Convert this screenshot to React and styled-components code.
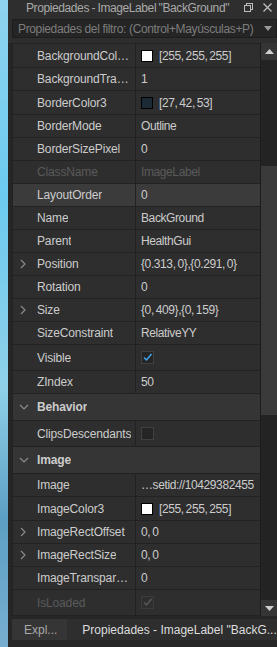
import styled, { createGlobalStyle } from 'styled-components';

const Global = createGlobalStyle`
    html, body {
        margin: 0;
        padding: 0;
        background: #262626;
    }
    body {
        font-family: "Liberation Sans", Arial, sans-serif;
        font-size: 12px;
        color: #cccccc;
    }
`

const Page = styled.div`
    width: 277px;
    height: 647px;
    display: flex;
    overflow: hidden;
`

const Sky = styled.div`
    width: 8px;
    flex-shrink: 0;
    background: linear-gradient(180deg, #8fd3ef 0%, #6ccaf0 30%, #8fd0e8 60%, #5c9fc4 80%, #77aed0 100%);
`

const Panel = styled.div`
    flex: 1;
    min-width: 0;
    display: flex;
    flex-direction: column;
    background: #2e2e2e;
`

const TitleBar = styled.div`
    height: 15px;
    display: flex;
    align-items: center;
    padding: 0 4px 0 18px;
    color: #a9a9a9;
    font-size: 12px;
    letter-spacing: -0.4px;
    word-spacing: -0.5px;
    gap: 8px;

    svg {
        flex-shrink: 0;
    }
`

const TitleText = styled.div`
    flex: 1;
    min-width: 0;
    white-space: nowrap;
    overflow: hidden;
`

const FilterWrap = styled.div`
    padding: 4px 0 5px 4px;
`

const FilterBox = styled.div`
    height: 17px;
    display: flex;
    align-items: center;
    padding: 0 4px 0 5px;
    background: #252525;
    border: 1px solid #1d1d1d;
    color: #7c7c7c;
    font-size: 12px;
    letter-spacing: -0.35px;
`

const Body = styled.div`
    flex: 1;
    display: flex;
    padding-left: 4px;
    background: #262626;
    min-height: 0;
`

const Grid = styled.div`
    flex: 1;
    min-width: 0;
    display: flex;
    flex-direction: column;
    border-top: 1px solid #222;
    border-left: 1px solid #222;
`

const Row = styled.div`
    height: ${p => p.$h}px;
    flex-shrink: 0;
    display: grid;
    grid-template-columns: 123px 1fr;
    background: ${p => (p.$active ? '#3b3b3b' : p.$header ? '#353535' : '#2e2e2e')};
    border-bottom: 1px solid #222;
    box-sizing: border-box;
`

const NameCell = styled.div`
    position: relative;
    display: flex;
    align-items: center;
    padding: 0 3px 0 24px;
    border-right: ${p => (p.$header ? 'none' : '1px solid #222')};
    color: ${p => (p.$disabled ? '#5a5a5a' : '#cccccc')};
    font-weight: ${p => (p.$header ? 'bold' : 'normal')};
    letter-spacing: -0.15px;
    min-width: 0;
`

const NameText = styled.span`
    overflow: hidden;
    text-overflow: ellipsis;
    white-space: nowrap;
`

const Chevron = styled.svg`
    position: absolute;
    left: 6px;
    top: 50%;
    transform: translateY(-50%);
`

const ValueCell = styled.div`
    display: flex;
    align-items: center;
    gap: 6px;
    padding-left: 5px;
    color: ${p => (p.$disabled ? '#5a5a5a' : '#cccccc')};
    letter-spacing: -0.4px;
    word-spacing: -1px;
    white-space: nowrap;
    overflow: hidden;
    min-width: 0;
`

const Swatch = styled.span`
    width: 10px;
    height: 10px;
    flex-shrink: 0;
    background: ${p => p.$color};
    border: 1px solid #000;
`

const Check = styled.span`
    width: 11px;
    height: 11px;
    display: flex;
    align-items: center;
    justify-content: center;
    background: ${p => (p.$disabled ? '#2e2e2e' : '#252525')};
    border: 1px solid ${p => (p.$disabled ? '#3c3c3c' : '#404040')};
`

const Scrollbar = styled.div`
    width: 16px;
    flex-shrink: 0;
    display: flex;
    flex-direction: column;
    background: #232323;
    border-left: 1px solid #1c1c1c;
    height: 574px;
`

const ScrollButton = styled.div`
    height: 17px;
    display: flex;
    align-items: center;
    justify-content: center;
    background: #353535;
`

const Track = styled.div`
    flex: 1;
    display: flex;
    flex-direction: column;
    padding-top: ${p => p.$top}px;
`

const Thumb = styled.div`
    height: 249px;
    background: #3a3a3a;
`

const Tabs = styled.div`
    height: 31px;
    display: flex;
    align-items: flex-start;
    padding: 3px 0 0 4px;
    background: #262626;
    box-sizing: border-box;
`

const Tab = styled.div`
    height: 21px;
    display: flex;
    align-items: center;
    padding: 0 ${p => (p.$active ? '0' : '10px')} 0 ${p => (p.$active ? '15px' : '12px')};
    flex: ${p => (p.$active ? 1 : 'none')};
    min-width: 0;
    background: ${p => (p.$active ? '#2e2e2e' : '#353535')};
    color: ${p => (p.$active ? '#dddddd' : '#a9a9a9')};
    white-space: nowrap;
    overflow: hidden;
`

const rows = [
    { name: 'BackgroundColor3', type: 'color', color: '#ffffff', value: '[255, 255, 255]' },
    { name: 'BackgroundTransparency', value: '1' },
    { name: 'BorderColor3', type: 'color', color: '#1b2a35', value: '[27, 42, 53]' },
    { name: 'BorderMode', value: 'Outline' },
    { name: 'BorderSizePixel', value: '0' },
    { name: 'ClassName', value: 'ImageLabel', disabled: true },
    { name: 'LayoutOrder', value: '0', active: true },
    { name: 'Name', value: 'BackGround' },
    { name: 'Parent', value: 'HealthGui' },
    { name: 'Position', value: '{0.313, 0},{0.291, 0}', expand: true },
    { name: 'Rotation', value: '0' },
    { name: 'Size', value: '{0, 409},{0, 159}', expand: true },
    { name: 'SizeConstraint', value: 'RelativeYY' },
    { name: 'Visible', type: 'check', checked: true },
    { name: 'ZIndex', value: '50' },
    { name: 'Behavior', type: 'header' },
    { name: 'ClipsDescendants', type: 'check' },
    { name: 'Image', type: 'header' },
    { name: 'Image', value: '…setid://10429382455' },
    { name: 'ImageColor3', type: 'color', color: '#ffffff', value: '[255, 255, 255]' },
    { name: 'ImageRectOffset', value: '0, 0', expand: true },
    { name: 'ImageRectSize', value: '0, 0', expand: true },
    { name: 'ImageTransparency', value: '0' },
    { name: 'IsLoaded', type: 'check', checked: true, disabled: true },
];

const heights = { text: 23, color: 24, check: 26, header: 27 };

function RightChevron() {
    return (
        <Chevron width="8" height="10" viewBox="0 0 8 10">
            <path d="M2 1 L6 5 L2 9" fill="none" stroke="#8a8a8a" strokeWidth="1.2" />
        </Chevron>
    );
}

function DownChevron() {
    return (
        <Chevron width="10" height="8" viewBox="0 0 10 8">
            <path d="M1 2 L5 6 L9 2" fill="none" stroke="#8a8a8a" strokeWidth="1.2" />
        </Chevron>
    );
}

function Value({ row }) {
    if (row.type === 'color') {
        return (
            <>
                <Swatch $color={row.color} />
                <span>{row.value}</span>
            </>
        );
    }
    if (row.type === 'check') {
        return (
            <Check $disabled={row.disabled}>
                {row.checked && (
                    <svg width="11" height="11" viewBox="0 0 11 11">
                        <path
                            d="M2 5.5 L4.5 8 L9.5 2"
                            fill="none"
                            stroke={row.disabled ? '#5a5a5a' : '#3ea6f0'}
                            strokeWidth="1.5"
                        />
                    </svg>
                )}
            </Check>
        );
    }
    return <span>{row.value}</span>;
}

function App() {
    return (
        <Page>
            <Global />
            <Sky />
            <Panel>
                <TitleBar>
                    <TitleText>Propiedades - ImageLabel "BackGround"</TitleText>
                    <svg width="11" height="11" viewBox="0 0 11 11">
                        <rect x="3.5" y="1.5" width="6" height="6" fill="none" stroke="#bdbdbd" />
                        <rect x="1.5" y="3.5" width="6" height="6" fill="#2e2e2e" stroke="#bdbdbd" />
                    </svg>
                    <svg width="11" height="11" viewBox="0 0 11 11">
                        <path d="M1.5 1.5 L9.5 9.5 M9.5 1.5 L1.5 9.5" stroke="#bdbdbd" strokeWidth="1.3" />
                    </svg>
                </TitleBar>
                <FilterWrap>
                    <FilterBox>
                        <TitleText>Propiedades del filtro: (Control+Mayúsculas+P)</TitleText>
                        <svg width="8" height="5" viewBox="0 0 8 5">
                            <path d="M0 0 L8 0 L4 5 Z" fill="#9a9a9a" />
                        </svg>
                    </FilterBox>
                </FilterWrap>
                <Body>
                    <Grid>
                        {rows.map((row, i) => {
                            const type = row.type || 'text';
                            const header = type === 'header';
                            return (
                                <Row key={i} $h={heights[type]} $active={row.active} $header={header}>
                                    <NameCell $header={header} $disabled={row.disabled}>
                                        {row.expand && <RightChevron />}
                                        {header && <DownChevron />}
                                        <NameText>{row.name}</NameText>
                                    </NameCell>
                                    {!header && (
                                        <ValueCell $disabled={row.disabled}>
                                            <Value row={row} />
                                        </ValueCell>
                                    )}
                                </Row>
                            );
                        })}
                    </Grid>
                    <Scrollbar>
                        <ScrollButton>
                            <svg width="9" height="5" viewBox="0 0 9 5">
                                <path d="M0 5 L4.5 0 L9 5 Z" fill="#cfcfcf" />
                            </svg>
                        </ScrollButton>
                        <Track $top={106}>
                            <Thumb />
                        </Track>
                        <ScrollButton>
                            <svg width="9" height="5" viewBox="0 0 9 5">
                                <path d="M0 0 L9 0 L4.5 5 Z" fill="#cfcfcf" />
                            </svg>
                        </ScrollButton>
                    </Scrollbar>
                </Body>
                <Tabs>
                    <Tab>Expl...</Tab>
                    <Tab $active>Propiedades - ImageLabel "BackG...</Tab>
                </Tabs>
            </Panel>
        </Page>
    );
}

export default App;
